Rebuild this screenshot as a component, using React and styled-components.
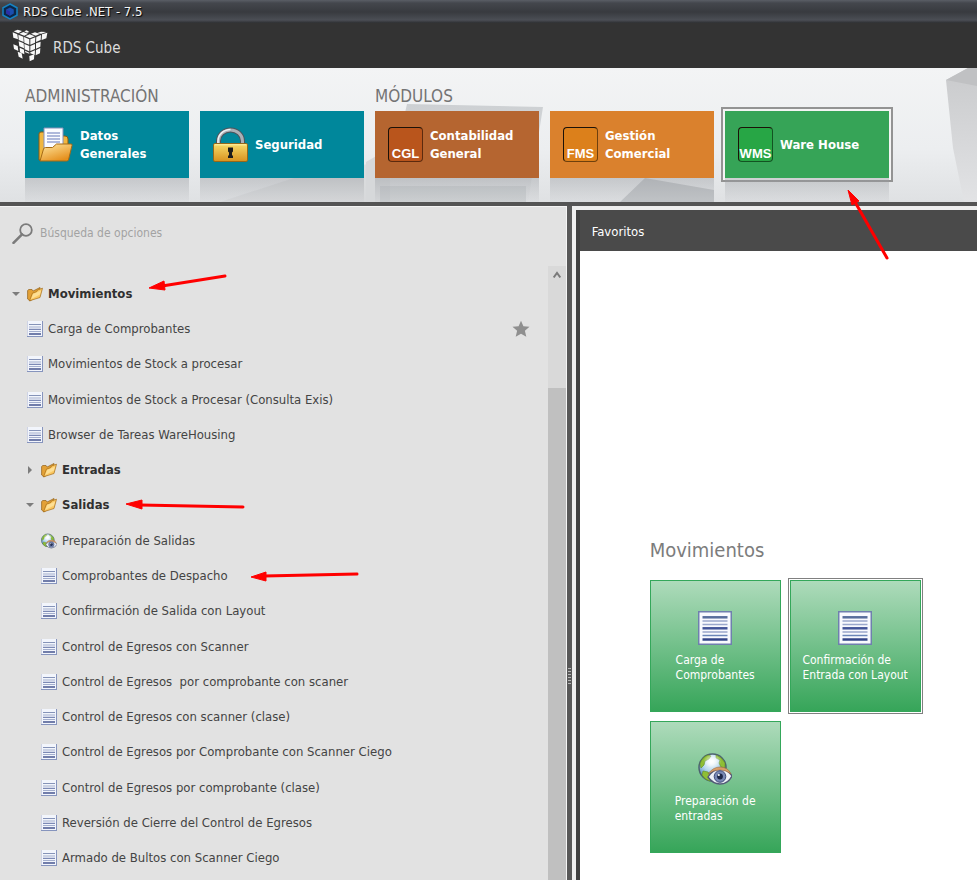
import React from "react";
import styled, { createGlobalStyle, css } from "styled-components";

const GlobalStyle = createGlobalStyle`
  *, *::before, *::after { box-sizing: border-box; }
  html, body { margin: 0; padding: 0; }
  body { font-family: "DejaVu Sans Condensed", "Noto Sans", sans-serif; font-size: 13px; color: #3c3c3c; }
  button, input { font: inherit; color: inherit; margin: 0; padding: 0; border: 0; background: none; }
  button { cursor: pointer; text-align: left; }
  h1, h2, h3, ul { margin: 0; padding: 0; font-weight: 400; list-style: none; }
  svg { display: block; flex: none; }
`;

const Page = styled.div`
  position: relative;
  display: flex;
  flex-direction: column;
  min-height: 100vh;
  overflow: hidden;
  background: #e2e2e2;
`;

const TitleBar = styled.div`
  display: flex;
  align-items: center;
  gap: 5px;
  height: 23px;
  padding-left: 2px;
  color: #f4f4f4;
  background: linear-gradient(#5a5e66 0, #44474d 3px, #383a3f 12px, #4b4e55 20px, #2e2f32 23px);
  text-shadow: 1px 1px 1px #000;
`;

const AppHeader = styled.header`
  display: flex;
  align-items: center;
  gap: 5px;
  height: 45px;
  padding: 0 11px;
  color: #dcdcdc;
  background: #333333;
`;

const AppName = styled.h1`
  padding-top: 4px;
  font-size: 15px;
  line-height: 20px;
`;

const Ribbon = styled.nav`
  position: relative;
  display: flex;
  gap: 11px;
  height: 134px;
  padding: 18px 25px 0;
  background: linear-gradient(#f3f4f5, #eceef0 60%, #dfe1e3);
`;

const Scenery = styled.svg`
  position: absolute;
  top: 0;
  left: 0;
`;

const ModuleGroup = styled.section`
  position: relative;
`;

const GroupTitle = styled.h2`
  font-size: 17px;
  line-height: 20px;
  margin-bottom: 5px;
  color: #747474;
`;

const TileRow = styled.div`
  display: flex;
  gap: 11px;
`;

const ModuleSlot = styled.div`
  &::after {
    content: "";
    display: block;
    height: 24px;
    background: linear-gradient(rgba(150, 153, 158, 0.4), rgba(190, 192, 196, 0.12));
  }
`;

const ModuleTile = styled.button`
  display: flex;
  align-items: center;
  gap: 7px;
  width: 164px;
  height: 67px;
  padding-left: 13px;
  color: #fff;
  font-weight: 700;
  line-height: 18px;
  background: ${(p) => p.$color};
  ${(p) =>
    p.$selected &&
    css`
      box-shadow: 0 0 0 2px #f4f4f4, 0 0 0 4px #939393;
    `}
`;

const ModuleLabel = styled.span`
  width: 96px;
`;

const CodeBadge = styled.span`
  display: flex;
  align-items: flex-end;
  justify-content: center;
  width: 35px;
  height: 35px;
  border: 1px solid rgba(0, 0, 0, 0.5);
  border-top-color: #1c1208;
  border-left-color: #1c1208;
  border-radius: 4px;
  background: ${(p) => p.$color};
  font-family: "Liberation Sans", sans-serif;
  font-size: 13px;
  line-height: 14px;
`;

const Workspace = styled.main`
  display: flex;
  flex: 1;
  border-top: 4px solid #545454;
`;

const Sidebar = styled.aside`
  display: flex;
  flex-direction: column;
  width: 58%;
  border-top: 1px solid #f4f4f4;
  border-right: 1px solid #f4f4f4;
`;

const SearchBar = styled.label`
  display: flex;
  align-items: center;
  gap: 7px;
  height: 52px;
  padding-left: 12px;
`;

const SearchInput = styled.input`
  flex: 1;
  min-width: 0;
  font-size: 12px;
  outline: none;
  &::placeholder { color: #a2a2a2; opacity: 1; }
`;

const TreeArea = styled.div`
  display: flex;
  flex: 1;
  margin-top: 7px;
`;

const Tree = styled.ul`
  display: grid;
  flex: 1;
  grid-auto-rows: minmax(35px, 1fr);
  padding: 10px 0 4px;
`;

const TreeItem = styled.li`
  display: flex;
  align-items: center;
  justify-content: space-between;
  padding-left: ${(p) => 12 + p.$depth * 14}px;
  padding-right: 18px;
`;

const TreeButton = styled.button`
  display: flex;
  align-items: center;
  gap: 5px;
  line-height: 18px;
  white-space: pre;
  font-weight: ${(p) => (p.$folder ? 700 : 400)};
  color: ${(p) => (p.$folder ? "#303030" : "#444")};
`;

const CaretBox = styled.span`
  display: flex;
  width: 10px;
`;

const IconButton = styled.button`
  display: flex;
`;

const ScrollTrack = styled.div`
  display: flex;
  flex-direction: column;
  align-items: center;
  width: 18px;
  background: #d9d9d9;
`;

const ScrollThumb = styled.div`
  flex: 1;
  width: 100%;
  background: #c0c0c0;
`;

const ScrollUp = styled.button`
  display: flex;
  justify-content: center;
  width: 100%;
  height: 122px;
  padding-top: 5px;
`;

const Splitter = styled.div`
  display: flex;
  justify-content: center;
  align-items: center;
  width: 5px;
  padding-top: 266px;
  background: #585858;
`;

const Favorites = styled.section`
  display: flex;
  flex: 1;
  flex-direction: column;
  min-width: 0;
  margin: 4px 0 0 4px;
  border-left: 4px solid #404040;
  background: #fff;
  box-shadow: 0 0 0 4px #eeeeee;
`;

const FavoritesHeader = styled.header`
  height: 41px;
  padding-left: 12px;
  color: #fff;
  line-height: 43px;
  background: #4a4a4a;
`;

const FavoritesBody = styled.div`
  display: flex;
  flex: 1;
  flex-direction: column;
  justify-content: flex-end;
  padding: 0 20px 27px 70px;
`;

const FavoritesTitle = styled.h2`
  font-size: 20px;
  line-height: 24px;
  margin-bottom: 18px;
  color: #7c7c7c;
`;

const FavoriteGrid = styled.div`
  display: flex;
  flex-wrap: wrap;
  gap: 9px;
`;

const FavoriteTile = styled.button`
  display: flex;
  flex-direction: column;
  align-items: center;
  gap: 8px;
  width: 131px;
  height: 132px;
  padding-top: 30px;
  border: 1px solid #34a75a;
  color: #fff;
  font-size: 12px;
  line-height: 15px;
  white-space: pre-line;
  background: linear-gradient(#aedbbb, #36a559);
  ${(p) =>
    p.$selected &&
    css`
      box-shadow: 0 0 0 1px #fff, 0 0 0 2px #808080;
    `}
`;

const Annotations = styled.svg`
  position: absolute;
  top: 0;
  left: 0;
  pointer-events: none;
`;

function HexIcon() {
  return (
    <svg width="16" height="17" viewBox="0 0 16 17">
      <path d="M8 1 15 4.8v7.4L8 16l-7-3.800V4.800Z" fill="#0c2748" stroke="#1583c4" strokeWidth="1.500" />
      <path d="M8 4.500 11.800 6.400v4.200L8 12.700 4.200 10.600V6.400Z" fill="#1b4fb0" />
      <path d="M4.200 6.400 8 8.400v4.300l-3.800-2.100Z" fill="#2d2fa6" />
    </svg>
  );
}

function Logo() {
  const faces = [
    "M20 25 34 31 36 46 22 41Z",
    "M37 32 52 38 53 54 38 48Z",
    "M54 39 70 46V62L55 56Z",
    "M38 52 53 58 54 73 40 67Z",
    "M55 60 70 66V82L56 76Z",
    "M22 61 35 66 37 81 24 75Z",
    "M41 71 54 77 55 91 42 85Z",
    "M57 80 70 86V89L58 85Z",
    "M35 83 47 88 50 104 38 98Z",
    "M73 46 88 40 87 56 73 62Z",
    "M91 39 105 33 104 48 90 54Z",
    "M108 31 124 26 121 43 107 48Z",
    "M73 66 87 60V75L73 81Z",
    "M90 58 104 53 103 68 90 74Z",
    "M73 85 87 79 86 93 73 88Z",
    "M90 78 103 72 102 88 89 94Z",
    "M70 96 85 91 84 106 71 112Z",
    "M23 22 35 17 48 21 37 28Z",
    "M40 29 52 24 66 29 55 35Z",
    "M58 37 71 31 86 37 72 43Z",
    "M55 22 62 19 70 24 63 26Z",
    "M75 29 87 25 101 30 89 35Z",
    "M92 28 105 23 121 24 106 29Z",
  ];
  return (
    <svg width="37" height="34" viewBox="15 15 111 102" fill="#f8f8f8">
      {faces.map((d) => <path key={d} d={d} />)}
    </svg>
  );
}

function FolderDocIcon() {
  return (
    <svg width="35" height="35" viewBox="0 0 35 35">
      <defs>
        <linearGradient id="folderFront" x1="0" y1="0" x2="0.600" y2="1">
          <stop offset="0" stopColor="#ffe9a3" />
          <stop offset="1" stopColor="#e58f1c" />
        </linearGradient>
      </defs>
      <path d="M1 33V7q0-2 2-2h7l3 4h14q3 0 3 3v21Z" fill="#f0b63f" stroke="#8a5a13" />
      <path d="M6 1h19v20l-19 6Z" fill="#fbfcff" stroke="#8590b8" />
      <path d="M9 6h13M9 9h13M9 12h13M9 15h13" stroke="#97a2cf" strokeWidth="1.500" />
      <path d="M2 34 5.500 22q.5-1.500 2-1.500h7l4-3.500h14.500q1.500 0 1 1.500L30.500 33q-.5 1-2 1Z" fill="url(#folderFront)" stroke="#a56a14" />
    </svg>
  );
}

function LockIcon() {
  return (
    <svg width="35" height="35" viewBox="0 0 35 35">
      <defs>
        <linearGradient id="lockBody" x1="0" y1="0" x2="0" y2="1">
          <stop offset="0" stopColor="#f7dc6a" />
          <stop offset="1" stopColor="#d8921f" />
        </linearGradient>
      </defs>
      <path d="M5.500 17v-3a12 11 0 0 1 24 0v3" fill="none" stroke="#4c545c" strokeWidth="5" />
      <path d="M5.500 17v-3a12 11 0 0 1 24 0v3" fill="none" stroke="#aab0b6" strokeWidth="3" />
      <path d="M5 16v-2a12.500 11.500 0 0 1 12.500-11.500" fill="none" stroke="#eef1f3" strokeWidth="1.500" />
      <rect x=".5" y="16.500" width="34" height="18" rx="1.500" fill="url(#lockBody)" stroke="#93681a" />
      <path d="M1.500 17.800h32" stroke="#fff0a4" />
      <path d="M15 20.500h5v4l-1 1v3h1v2.500h-5v-2.500h1v-3l-1-1Z" fill="#1c1c1c" />
    </svg>
  );
}

function PageIcon({ size = 16 }) {
  if (size > 20) {
    return (
      <svg width="34" height="34" viewBox="0 0 34 34">
        <rect x=".75" y=".75" width="32.500" height="32.500" fill="#f8fafe" stroke="#6f7fae" strokeWidth="1.500" />
        <path d="M4.500 6.300h25" stroke="#586e9c" strokeWidth="2.500" />
        <path d="M4.500 10h25M4.500 13.500h25M4.500 21h25" stroke="#9aa8cc" strokeWidth="1.500" />
        <path d="M4.500 17.300h25" stroke="#445699" strokeWidth="2.500" />
        <path d="M4.500 24.500h25" stroke="#6a86b8" strokeWidth="1.500" />
        <path d="M4.500 28.500h25" stroke="#334488" strokeWidth="2.500" />
      </svg>
    );
  }
  return (
    <svg width="16" height="16" viewBox="0 0 16 16">
      <rect width="16" height="16" fill="#f2f5fc" />
      <path d="M0 0v16" stroke="#a9b2ce" />
      <path d="M15.500 0v16M0 15.500h16" stroke="#8694bd" />
      <path d="M2 3.500h12" stroke="#8593b8" />
      <path d="M2 6h12M2 10.500h12" stroke="#a3aecd" />
      <path d="M2 8.300h12" stroke="#5e6ea3" />
      <path d="M2 13h12" stroke="#46558f" strokeWidth="1.500" />
    </svg>
  );
}

function FolderIcon() {
  return (
    <svg width="16" height="16" viewBox="0 0 16 16">
      <path d="M.6 13V4.500L1.800 3.500H5L6.200 5 13 1.500V8L3 15Z" fill="#e3a137" stroke="#8f5f19" strokeWidth=".7" />
      <path d="M2.500 14.800 5.500 7 9.500 5.800 10.500 4 15.500 2.200 13 11.500Z" fill="#fbc862" stroke="#a56b17" strokeWidth=".7" />
      <path d="m4.200 13 2-5 7.800-3.500-1 4Z" fill="#ffeeb8" opacity=".6" />
    </svg>
  );
}

function GlobeIcon({ size = 16 }) {
  return (
    <svg width={size} height={size} viewBox="0 0 34 34">
      <defs>
        <radialGradient id="globeSea" cx="0.450" cy="0.300" r="0.700">
          <stop offset="0" stopColor="#ffffff" />
          <stop offset="0.450" stopColor="#b9d9ef" />
          <stop offset="1" stopColor="#2f6fae" />
        </radialGradient>
        <radialGradient id="globeShine" cx="0.500" cy="0.450" r="0.500">
          <stop offset="0" stopColor="#ffffff" stopOpacity="0.950" />
          <stop offset="1" stopColor="#ffffff" stopOpacity="0" />
        </radialGradient>
      </defs>
      <circle cx="14.500" cy="15.500" r="13.500" fill="url(#globeSea)" stroke="#4d6270" strokeWidth="1.500" />
      <path d="M2 12Q4 5 10 3l3 1-2 3-4 2-1 4-3 3ZM18 3q6 2 9 8v5l-4-1-2-4 1-3-4-2ZM5 19l5 1 3 4-1 5q-5-1-8-6Z" fill="#8fbe35" stroke="#5c8e23" strokeWidth=".6" />
      <ellipse cx="14.500" cy="9.500" rx="9" ry="7" fill="url(#globeShine)" />
      <path d="M10 25q5-8 12-8 8 0 12 7-4 8-12 8-7 0-12-7Z" fill="#eef1f8" stroke="#535b78" strokeWidth="1.400" />
      <path d="M10 22q5-7 12-7 8 0 11 7-5-4-11-4-7 0-12 4Z" fill="#d99d68" stroke="#9d6a40" strokeWidth=".6" />
      <circle cx="22" cy="24.500" r="5.800" fill="#7888b4" stroke="#3c4a78" />
      <circle cx="22" cy="24.500" r="2.900" fill="#1d2748" />
      <circle cx="20.800" cy="23" r="1.100" fill="#fff" />
    </svg>
  );
}

function Caret({ open }) {
  return (
    <svg width="8" height="10" viewBox="0 0 8 10" fill="#7c7c7c">
      {open ? <path d="M0 3h8L4 7Z" /> : <path d="M2 1v8l4-4Z" />}
    </svg>
  );
}

function SearchIcon() {
  return (
    <svg width="21" height="21" viewBox="0 0 21 21" fill="none" stroke="#7b7b7b">
      <circle cx="14" cy="7" r="5.800" strokeWidth="1.800" />
      <path d="m10 11.300-8.500 8.500" strokeWidth="2.600" strokeLinecap="round" />
    </svg>
  );
}

function StarIcon() {
  return (
    <svg width="18" height="18" viewBox="0 0 18 18" fill="#8f8f8f">
      <path d="m9 .8 2.400 5.500 6.100.5-4.600 4 1.400 6L9 13.700l-5.300 3.100 1.400-6-4.600-4 6.100-.5Z" />
    </svg>
  );
}

function RibbonScenery() {
  return (
    <Scenery width="977" height="134" viewBox="0 0 977 134">
      <defs>
        <linearGradient id="cubeFace" x1="0" y1="0" x2="0" y2="1">
          <stop offset="0" stopColor="#c9cacc" />
          <stop offset="1" stopColor="#e2e3e5" />
        </linearGradient>
        <linearGradient id="cubeTop" x1="0" y1="0" x2="0" y2="1">
          <stop offset="0" stopColor="#cdd0d3" />
          <stop offset="1" stopColor="#dfe1e3" />
        </linearGradient>
      </defs>
      <path d="M407 36 543 39 528 134H385Z" fill="url(#cubeTop)" />
      <path d="M220 134 300 108 368 96 385 80V134Z" fill="#d2d4d6" opacity=".6" />
      <path d="M366 94 390 80V134H366Z" fill="#d6d8da" />
      <path d="M380 118H526V134H380Z" fill="#b4b8bc" opacity=".4" />
      <path d="M645 110 714 122V134H620Z" fill="#c0c3c6" />
      <path d="M946 12 968 0H977V134H964L953 80Z" fill="url(#cubeFace)" />
      <path d="M946 12 968 0H977V18Z" fill="#c0c1c3" />
    </Scenery>
  );
}

const moduleGroups = [
  {
    title: "ADMINISTRACIÓN",
    modules: [
      { label: "Datos Generales", color: "#00879b", icon: <FolderDocIcon /> },
      { label: "Seguridad", color: "#00879b", icon: <LockIcon /> },
    ],
  },
  {
    title: "MÓDULOS",
    modules: [
      { label: "Contabilidad General", color: "#b56530", code: "CGL", badge: "#b9551c" },
      { label: "Gestión Comercial", color: "#da812d", code: "FMS", badge: "#dc801b" },
      { label: "Ware House", color: "#36a457", code: "WMS", badge: "#27a645", selected: true },
    ],
  },
];

const treeRows = [
  { depth: 0, label: "Movimientos", folder: true, open: true },
  { depth: 0, label: "Carga de Comprobantes", starred: true },
  { depth: 0, label: "Movimientos de Stock a procesar" },
  { depth: 0, label: "Movimientos de Stock a Procesar (Consulta Exis)" },
  { depth: 0, label: "Browser de Tareas WareHousing" },
  { depth: 1, label: "Entradas", folder: true, open: false },
  { depth: 1, label: "Salidas", folder: true, open: true },
  { depth: 1, label: "Preparación de Salidas", globe: true },
  { depth: 1, label: "Comprobantes de Despacho" },
  { depth: 1, label: "Confirmación de Salida con Layout" },
  { depth: 1, label: "Control de Egresos con Scanner" },
  { depth: 1, label: "Control de Egresos  por comprobante con scaner" },
  { depth: 1, label: "Control de Egresos con scanner (clase)" },
  { depth: 1, label: "Control de Egresos por Comprobante con Scanner Ciego" },
  { depth: 1, label: "Control de Egresos por comprobante (clase)" },
  { depth: 1, label: "Reversión de Cierre del Control de Egresos" },
  { depth: 1, label: "Armado de Bultos con Scanner Ciego" },
];

const favorites = [
  { label: "Carga de\nComprobantes", icon: <PageIcon size={34} /> },
  { label: "Confirmación de\nEntrada con Layout", icon: <PageIcon size={34} />, selected: true },
  { label: "Preparación de\nentradas", icon: <GlobeIcon size={34} /> },
];

const arrows = [
  { line: "M225 276 162 286", head: "M149 288 164 281 165 290Z" },
  { line: "M243 507 140 505", head: "M126 504 142 500 142 509Z" },
  { line: "M357 574 264 576", head: "M251 577 266 572 266 581Z" },
  { line: "M887 258 855 202", head: "M848 190 859 201 852 205Z" },
];

export default function App() {
  return (
    <Page>
      <GlobalStyle />
      <TitleBar><HexIcon />RDS Cube .NET - 7.5</TitleBar>
      <AppHeader>
        <Logo />
        <AppName>RDS Cube</AppName>
      </AppHeader>
      <Ribbon>
        <RibbonScenery />
        {moduleGroups.map((group) => (
          <ModuleGroup key={group.title}>
            <GroupTitle>{group.title}</GroupTitle>
            <TileRow>
              {group.modules.map((m) => (
                <ModuleSlot key={m.label}>
                  <ModuleTile $color={m.color} $selected={m.selected}>
                    {m.icon || <CodeBadge $color={m.badge}>{m.code}</CodeBadge>}
                    <ModuleLabel>{m.label}</ModuleLabel>
                  </ModuleTile>
                </ModuleSlot>
              ))}
            </TileRow>
          </ModuleGroup>
        ))}
      </Ribbon>
      <Workspace>
        <Sidebar>
          <SearchBar>
            <SearchIcon />
            <SearchInput placeholder="Búsqueda de opciones" aria-label="Búsqueda de opciones" />
          </SearchBar>
          <TreeArea>
            <Tree>
              {treeRows.map((row) => (
                <TreeItem key={row.label} $depth={row.depth}>
                  <TreeButton $folder={row.folder} aria-expanded={row.open}>
                    <CaretBox>{row.folder && <Caret open={row.open} />}</CaretBox>
                    {row.folder ? <FolderIcon /> : row.globe ? <GlobeIcon /> : <PageIcon />}
                    {row.label}
                  </TreeButton>
                  {row.starred && <IconButton aria-label="Favorito"><StarIcon /></IconButton>}
                </TreeItem>
              ))}
            </Tree>
            <ScrollTrack>
              <ScrollUp aria-label="Subir">
                <svg width="8" height="8" viewBox="0 0 8 8" fill="none" stroke="#7a7a7a" strokeWidth="2">
                  <path d="M.7 6.500 4 2l3.300 4.500" />
                </svg>
              </ScrollUp>
              <ScrollThumb />
            </ScrollTrack>
          </TreeArea>
        </Sidebar>
        <Splitter>
          <svg width="3" height="16" viewBox="0 0 3 16" stroke="#b5b5b5">
            <path d="M0 .5h3M0 3.500h3M0 6.500h3M0 9.500h3M0 12.500h3M0 15.500h3" />
          </svg>
        </Splitter>
        <Favorites>
          <FavoritesHeader>Favoritos</FavoritesHeader>
          <FavoritesBody>
            <FavoritesTitle>Movimientos</FavoritesTitle>
            <FavoriteGrid>
              {favorites.map((f) => (
                <FavoriteTile key={f.label} $selected={f.selected}>
                  {f.icon}
                  <span>{f.label}</span>
                </FavoriteTile>
              ))}
            </FavoriteGrid>
          </FavoritesBody>
        </Favorites>
      </Workspace>
      <Annotations width="977" height="880" viewBox="0 0 977 880">
        {arrows.map((a) => (
          <g key={a.line} fill="#f00" stroke="#f00">
            <path d={a.line} strokeWidth="3" strokeLinecap="round" />
            <path d={a.head} strokeWidth="1" />
          </g>
        ))}
      </Annotations>
    </Page>
  );
}
